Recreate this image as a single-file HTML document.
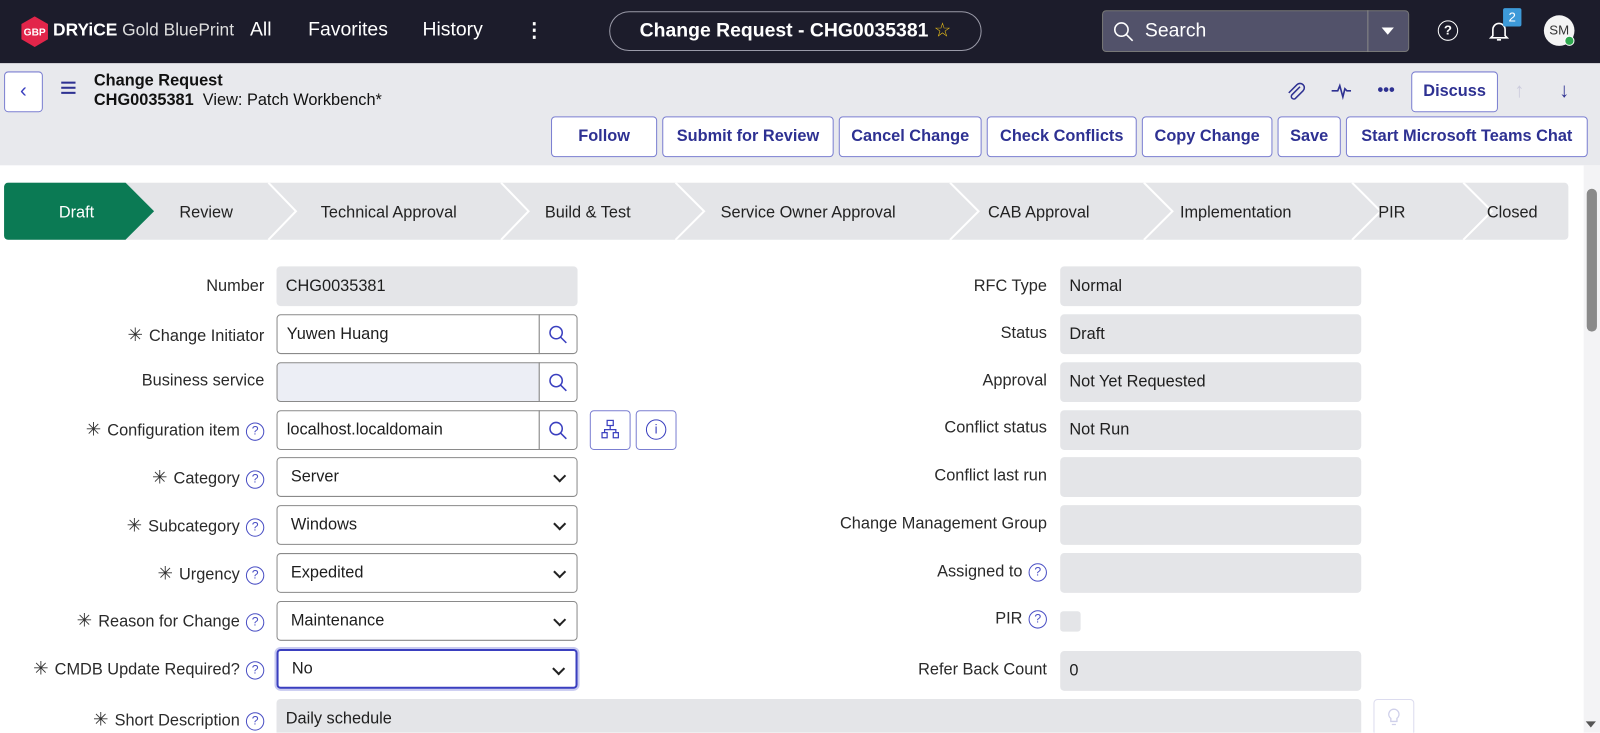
<!DOCTYPE html>
<html><head><meta charset="utf-8"><style>
*{box-sizing:border-box;margin:0;padding:0}
body{width:1600px;height:732px;overflow:hidden;font-family:"Liberation Sans",sans-serif;background:#fff;color:#1e1e1e}
#w{position:absolute;left:0;top:0;width:1568px;height:718px;transform:scale(1.020408);transform-origin:0 0;overflow:hidden}
.a{position:absolute}
.top{left:0;top:0;width:1568px;height:62px;background:#1c1c2b}
.nav{color:#fff;font-size:19px;top:19px}
.hdr{left:0;top:62px;width:1568px;height:100px;background:#e8e9ed}
.btn{position:absolute;top:114px;height:40px;border:1px solid #7b7fd1;border-radius:4px;background:#fff;color:#2e3192;font-size:16px;font-weight:bold;display:flex;align-items:center;justify-content:center;white-space:nowrap}
.lbl{position:absolute;font-size:16px;color:#2a2a2a;text-align:right;white-space:nowrap}
.f{position:absolute;height:39px;border-radius:4px;font-size:16px;padding:0 9px;display:flex;align-items:center}
.ro{background:#e4e5e8}
.in{border:1px solid #8a8a8a;background:#fff}
.q{display:inline-block;width:18px;height:18px;border:1.5px solid #4a4fc4;border-radius:50%;color:#4a4fc4;font-size:12px;text-align:center;line-height:15px;margin-left:6px;vertical-align:1px}
.st{color:#333;margin-right:6px;font-size:18px}
.srch{position:absolute;width:38px;height:39px;border:1px solid #8a8a8a;border-radius:0 4px 4px 0;background:#fff}
.sel:after{content:"";position:absolute;right:12px;top:13px;width:7px;height:7px;border-right:2px solid #222;border-bottom:2px solid #222;transform:rotate(45deg)}
</style></head><body><div id="w">
<div class="a top"></div>
<svg class="a" style="left:20px;top:16px" width="28" height="30" viewBox="0 0 28 30"><polygon points="14,0 27,7.5 27,22.5 14,30 1,22.5 1,7.5" fill="#e2254a"/><text x="14" y="19" fill="#fff" font-size="10" font-weight="bold" text-anchor="middle" font-family="Liberation Sans">GBP</text></svg>
<div class="a" style="left:52px;top:20px;color:#fff;font-size:17px"><b>DRYiCE</b> <span style="color:#ddd">Gold BluePrint</span></div>
<div class="a nav" style="left:245px">All</div>
<div class="a nav" style="left:302px">Favorites</div>
<div class="a nav" style="left:414px">History</div>
<div class="a nav" style="left:514px;font-weight:bold">⋮</div>
<div class="a" style="left:597px;top:11px;width:365px;height:39px;border:1px solid #9a9aa8;border-radius:20px;color:#fff;font-size:19px;font-weight:bold;text-align:center;line-height:37px">Change Request - CHG0035381 <span style="color:#f0c419;font-weight:normal">☆</span></div>
<div class="a" style="left:1080px;top:10px;width:301px;height:41px;background:#52526a;border:1px solid #777;border-radius:4px"></div>
<div class="a" style="left:1340px;top:10px;width:1px;height:41px;background:#888"></div>
<svg class="a" style="left:1090px;top:20px" width="22" height="22"><circle cx="9" cy="9" r="6.5" stroke="#fff" stroke-width="1.6" fill="none"/><line x1="14" y1="14" x2="20" y2="20" stroke="#fff" stroke-width="1.6"/></svg>
<div class="a" style="left:1122px;top:20px;color:#fff;font-size:19px">Search</div>
<div class="a" style="left:1354px;top:27px;border-left:6px solid transparent;border-right:6px solid transparent;border-top:7px solid #fff"></div>
<div class="a" style="left:1409px;top:20px;width:20px;height:20px;border:1.6px solid #fff;border-radius:50%;color:#fff;font-size:13px;text-align:center;line-height:17px;font-weight:bold">?</div>
<svg class="a" style="left:1459px;top:20px" width="20" height="22"><path d="M4 15 V9 a6 6 0 0 1 12 0 V15 l2 2 H2 z M8 19 h4" stroke="#fff" stroke-width="1.6" fill="none"/></svg>
<div class="a" style="left:1473px;top:8px;width:18px;height:18px;background:#3d9ad9;color:#fff;font-size:13px;text-align:center;line-height:18px;border-radius:2px">2</div>
<div class="a" style="left:1513px;top:15px;width:30px;height:30px;background:#f4f4f4;border-radius:50%;color:#333;font-size:13px;text-align:center;line-height:30px">SM</div>
<div class="a" style="left:1533px;top:35px;width:10px;height:10px;background:#2fa84f;border-radius:50%;border:1.5px solid #fff"></div>

<div class="a hdr"></div>
<div class="a" style="left:4px;top:70px;width:38px;height:40px;border:1px solid #7b7fd1;border-radius:4px;background:#fff;color:#3a3fbf;font-size:20px;text-align:center;line-height:36px">‹</div>
<div class="a" style="left:60px;top:80px;width:14px;height:2px;background:#2e3192;box-shadow:0 5px 0 #2e3192,0 10px 0 #2e3192"></div>
<div class="a" style="left:92px;top:71px;font-size:16px;font-weight:bold;color:#111">Change Request</div>
<div class="a" style="left:92px;top:90px;font-size:16px;color:#111"><b>CHG0035381</b>&nbsp; View: Patch Workbench*</div>
<svg class="a" style="left:1259px;top:79px" width="22" height="22"><path d="M15 6 L7 14 a2.5 2.5 0 0 0 3.5 3.5 L18 10 a4 4 0 0 0 -6 -6 L4 12" stroke="#2e3192" stroke-width="1.5" fill="none"/></svg>
<svg class="a" style="left:1304px;top:79px" width="22" height="20"><path d="M1 10 H7 L9 5 L12 16 L14 8 L16 10 H20" stroke="#2e3192" stroke-width="1.6" fill="none"/></svg>
<div class="a" style="left:1350px;top:80px;font-size:16px;color:#2e3192;font-weight:bold">•••</div>
<div class="a" style="left:1383px;top:70px;width:85px;height:40px;border:1px solid #7b7fd1;border-radius:4px;background:#fff;color:#2e3192;font-size:16px;font-weight:bold;text-align:center;line-height:38px">Discuss</div>
<div class="a" style="left:1484px;top:78px;color:#ccd;font-size:20px">↑</div>
<div class="a" style="left:1528px;top:78px;color:#2e3192;font-size:20px">↓</div>
<div class="btn" style="left:540px;width:104px">Follow</div>
<div class="btn" style="left:649px;width:168px">Submit for Review</div>
<div class="btn" style="left:822px;width:140px">Cancel Change</div>
<div class="btn" style="left:967px;width:147px">Check Conflicts</div>
<div class="btn" style="left:1119px;width:128px">Copy Change</div>
<div class="btn" style="left:1252px;width:62px">Save</div>
<div class="btn" style="left:1319px;width:237px">Start Microsoft Teams Chat</div>

<svg class="a" style="left:0;top:179px" width="1540" height="57">
<rect x="4" y="0" width="1533" height="56" rx="4" fill="#e4e5e8"/>
<path d="M4 4 a4 4 0 0 1 4 -4 H123 L151 28 L123 56 H8 a4 4 0 0 1 -4 -4z" fill="#0b7a54"/>
<g stroke="#fff" stroke-width="2" fill="none">
<polyline points="263,0 290,28 263,56"/><polyline points="491,0 518,28 491,56"/><polyline points="662,0 690,28 662,56"/><polyline points="931,0 959,28 931,56"/><polyline points="1121,0 1149,28 1121,56"/><polyline points="1325,0 1353,28 1325,56"/><polyline points="1434,0 1462,28 1434,56"/>
</g>
<g font-family="Liberation Sans" font-size="16" fill="#222" text-anchor="middle">
<text x="75" y="34" fill="#fff">Draft</text><text x="202" y="34">Review</text><text x="381" y="34">Technical Approval</text><text x="576" y="34">Build &amp; Test</text><text x="792" y="34">Service Owner Approval</text><text x="1018" y="34">CAB Approval</text><text x="1211" y="34">Implementation</text><text x="1364" y="34">PIR</text><text x="1482" y="34">Closed</text>
</g></svg>

<div class="a" style="left:1552px;top:162px;width:16px;height:570px;background:#f3f3f5"></div>
<div class="a" style="left:1555px;top:185px;width:10px;height:140px;background:#8a8a8a;border-radius:5px"></div>
<div class="a" style="left:1554px;top:707px;border-left:5px solid transparent;border-right:5px solid transparent;border-top:6px solid #555"></div>

<div class="lbl" style="right:1309px;top:272px">Number</div>
<div class="f ro" style="left:271px;top:261px;width:295px">CHG0035381</div>
<div class="lbl" style="right:1309px;top:318px"><span class="st">✳</span>Change Initiator</div>
<div class="f in" style="left:271px;top:308px;width:258px;border-radius:4px 0 0 4px">Yuwen Huang</div>
<div class="srch" style="left:528px;top:308px"></div>
<div class="lbl" style="right:1309px;top:365px">Business service</div>
<div class="f in" style="left:271px;top:355px;width:258px;border-radius:4px 0 0 4px;background:#eceef5"></div>
<div class="srch" style="left:528px;top:355px"></div>
<div class="lbl" style="right:1309px;top:411px"><span class="st">✳</span>Configuration item<span class="q">?</span></div>
<div class="f in" style="left:271px;top:402px;width:258px;border-radius:4px 0 0 4px">localhost.localdomain</div>
<div class="srch" style="left:528px;top:402px"></div>
<div class="a" style="left:578px;top:402px;width:40px;height:39px;border:1px solid #7b7fd1;border-radius:4px"></div>
<svg class="a" style="left:589px;top:411px" width="18" height="20"><g stroke="#3a3fbf" stroke-width="1.2" fill="none"><rect x="6" y="1" width="6" height="5"/><rect x="1" y="13" width="5" height="5"/><rect x="12" y="13" width="5" height="5"/><path d="M9 6 V10 M3.5 13 V10 H14.5 V13"/></g></svg>
<div class="a" style="left:623px;top:402px;width:40px;height:39px;border:1px solid #7b7fd1;border-radius:4px"></div>
<div class="a" style="left:633px;top:411px;width:20px;height:20px;border:1.5px solid #3a3fbf;border-radius:50%;color:#3a3fbf;font-size:13px;text-align:center;line-height:17px">i</div>
<div class="lbl" style="right:1309px;top:458px"><span class="st">✳</span>Category<span class="q">?</span></div>
<div class="f in sel" style="left:271px;top:448px;width:295px;padding-left:13px">Server</div>
<div class="lbl" style="right:1309px;top:505px"><span class="st">✳</span>Subcategory<span class="q">?</span></div>
<div class="f in sel" style="left:271px;top:495px;width:295px;padding-left:13px">Windows</div>
<div class="lbl" style="right:1309px;top:552px"><span class="st">✳</span>Urgency<span class="q">?</span></div>
<div class="f in sel" style="left:271px;top:542px;width:295px;padding-left:13px">Expedited</div>
<div class="lbl" style="right:1309px;top:598px"><span class="st">✳</span>Reason for Change<span class="q">?</span></div>
<div class="f in sel" style="left:271px;top:589px;width:295px;padding-left:13px">Maintenance</div>
<div class="lbl" style="right:1309px;top:645px"><span class="st">✳</span>CMDB Update Required?<span class="q">?</span></div>
<div class="f in sel" style="left:271px;top:636px;width:295px;padding-left:13px;border:2px solid #3a3fbf;box-shadow:0 0 0 2px #c8caf0">No</div>
<div class="lbl" style="right:1309px;top:695px"><span class="st">✳</span>Short Description<span class="q">?</span></div>
<div class="f ro" style="left:271px;top:685px;width:1063px;height:40px">Daily schedule</div>
<div class="a" style="left:1346px;top:685px;width:40px;height:36px;border:1px solid #dcdcef;border-radius:4px"></div>
<svg class="a" style="left:1358px;top:693px" width="16" height="20"><path d="M8 2 a5 5 0 0 0 -3 9 V14 H11 V11 a5 5 0 0 0 -3 -9z M6 17 H10" stroke="#cfd0ea" stroke-width="1.3" fill="none"/></svg>

<svg class="a" style="left:537px;top:318px" width="20" height="20"><circle cx="8" cy="8" r="6" stroke="#3a3fbf" stroke-width="1.5" fill="none"/><line x1="12.5" y1="12.5" x2="18" y2="18" stroke="#3a3fbf" stroke-width="1.5"/></svg>
<svg class="a" style="left:537px;top:365px" width="20" height="20"><circle cx="8" cy="8" r="6" stroke="#3a3fbf" stroke-width="1.5" fill="none"/><line x1="12.5" y1="12.5" x2="18" y2="18" stroke="#3a3fbf" stroke-width="1.5"/></svg>
<svg class="a" style="left:537px;top:412px" width="20" height="20"><circle cx="8" cy="8" r="6" stroke="#3a3fbf" stroke-width="1.5" fill="none"/><line x1="12.5" y1="12.5" x2="18" y2="18" stroke="#3a3fbf" stroke-width="1.5"/></svg>

<div class="lbl" style="right:542px;top:272px">RFC Type</div>
<div class="f ro" style="left:1039px;top:261px;width:295px">Normal</div>
<div class="lbl" style="right:542px;top:318px">Status</div>
<div class="f ro" style="left:1039px;top:308px;width:295px">Draft</div>
<div class="lbl" style="right:542px;top:365px">Approval</div>
<div class="f ro" style="left:1039px;top:355px;width:295px">Not Yet Requested</div>
<div class="lbl" style="right:542px;top:411px">Conflict status</div>
<div class="f ro" style="left:1039px;top:402px;width:295px">Not Run</div>
<div class="lbl" style="right:542px;top:458px">Conflict last run</div>
<div class="f ro" style="left:1039px;top:448px;width:295px"></div>
<div class="lbl" style="right:542px;top:505px">Change Management Group</div>
<div class="f ro" style="left:1039px;top:495px;width:295px"></div>
<div class="lbl" style="right:542px;top:552px">Assigned to<span class="q">?</span></div>
<div class="f ro" style="left:1039px;top:542px;width:295px"></div>
<div class="lbl" style="right:542px;top:598px">PIR<span class="q">?</span></div>
<div class="a" style="left:1039px;top:599px;width:20px;height:20px;background:#e4e5e8;border-radius:3px"></div>
<div class="lbl" style="right:542px;top:648px">Refer Back Count</div>
<div class="f ro" style="left:1039px;top:638px;width:295px">0</div>
</div></body></html>
